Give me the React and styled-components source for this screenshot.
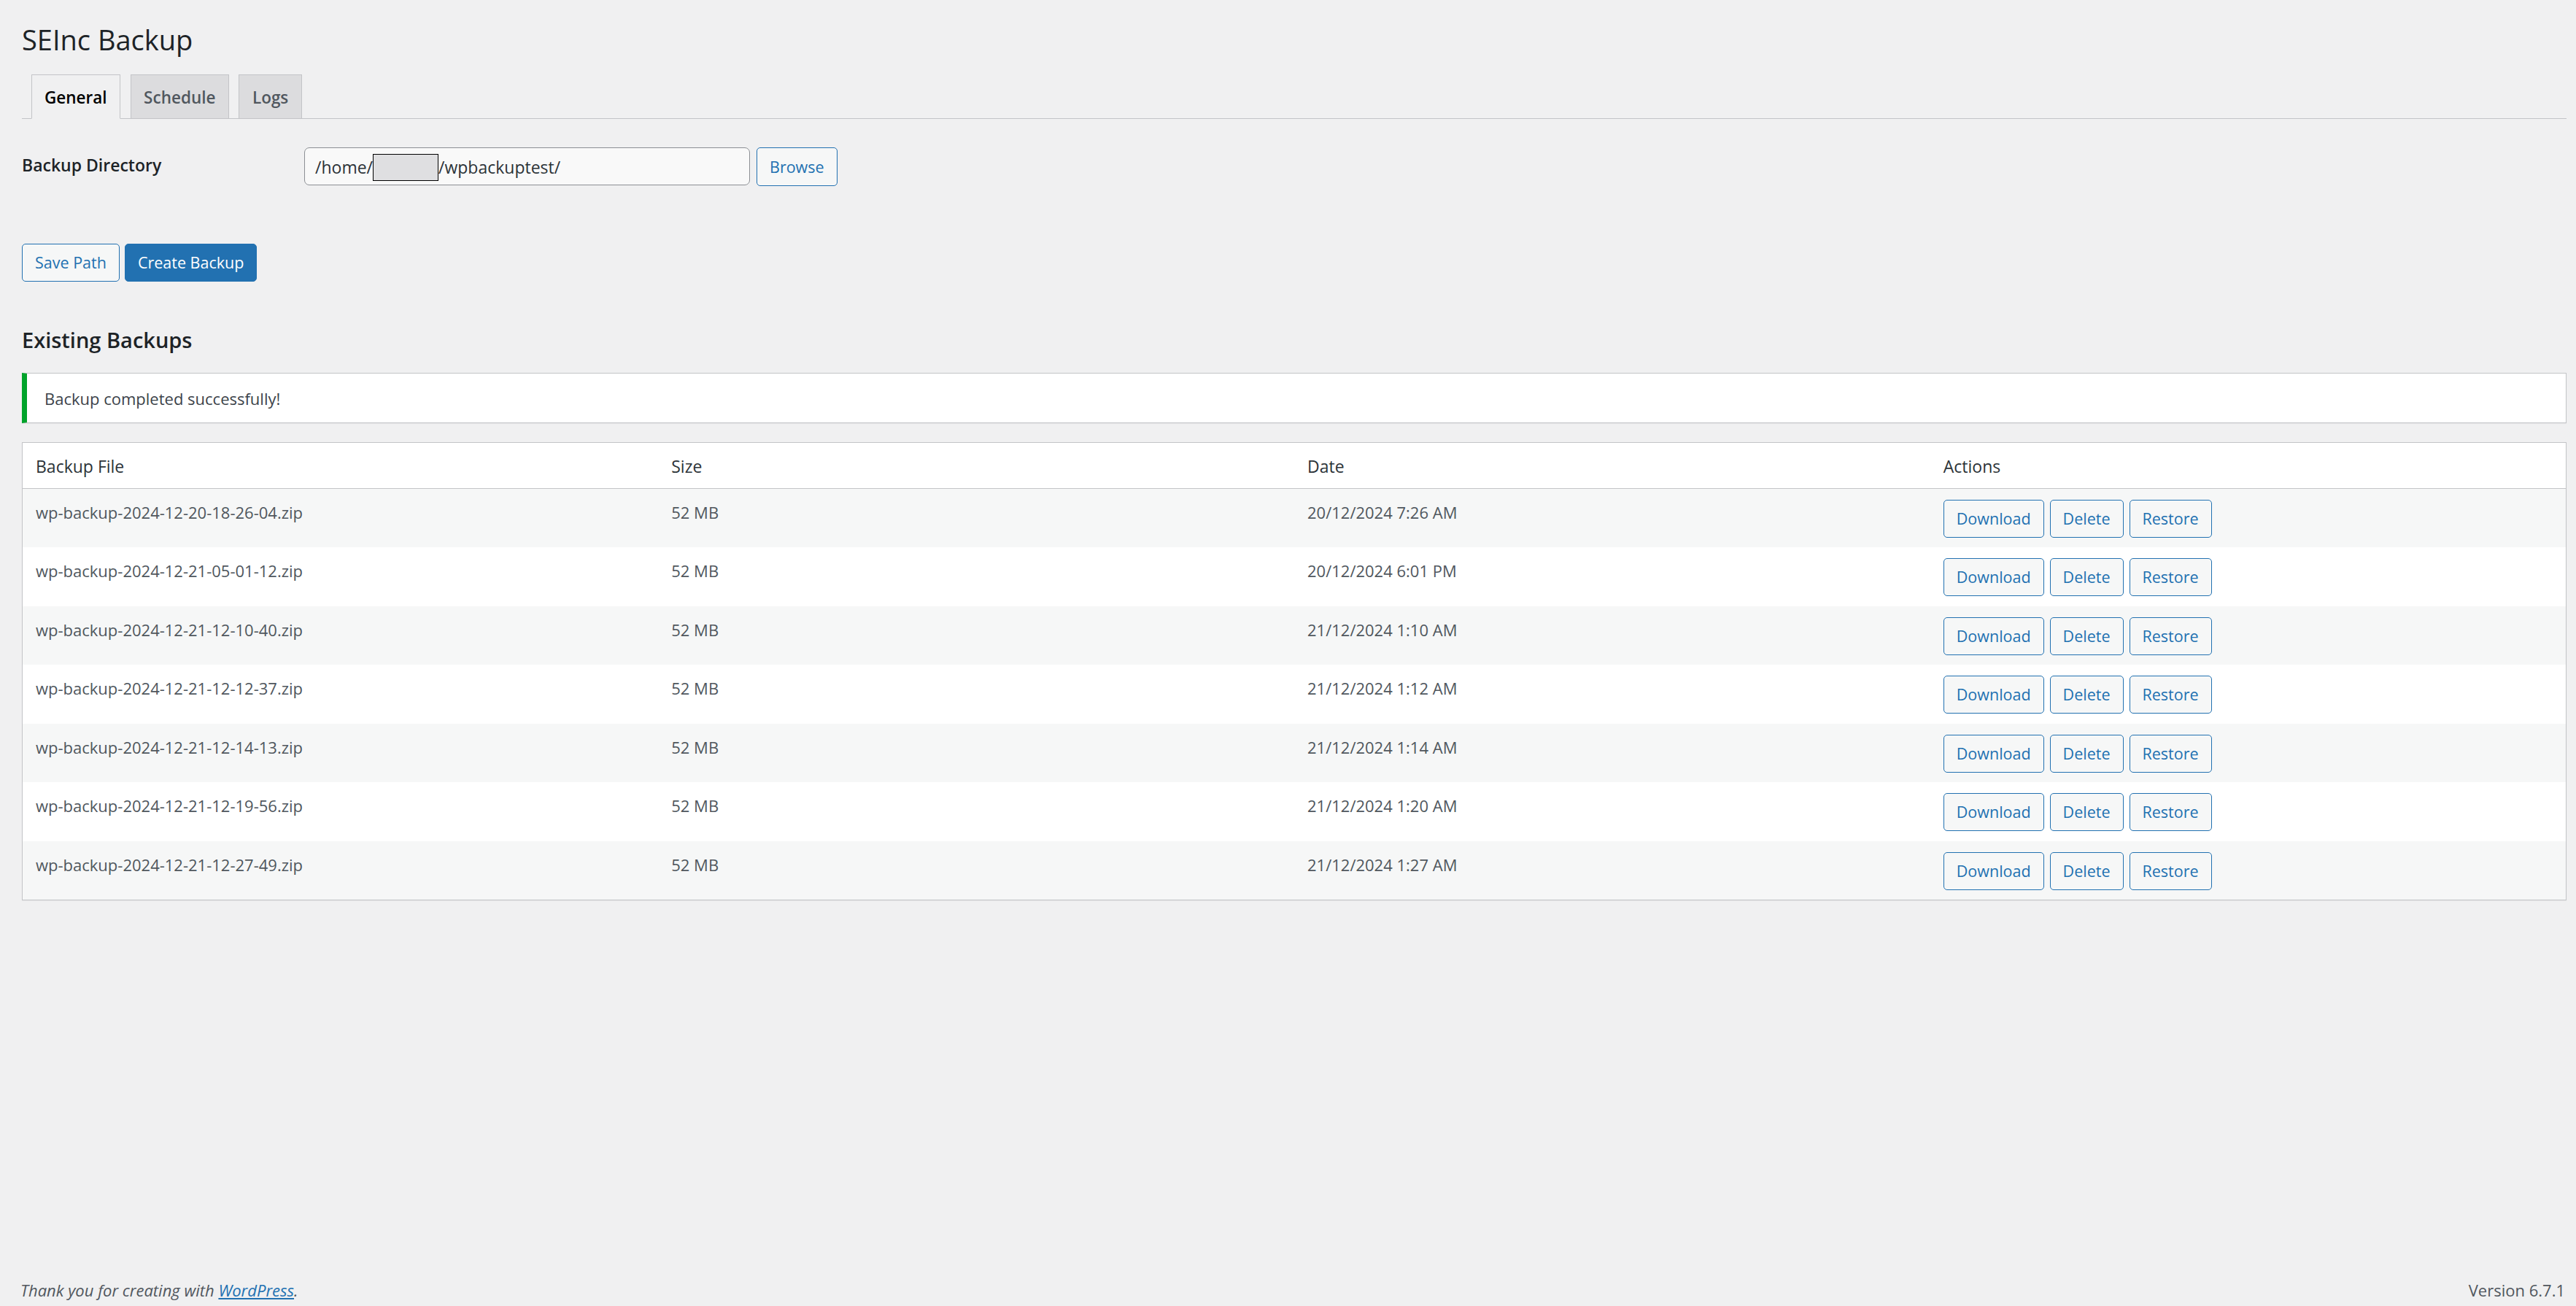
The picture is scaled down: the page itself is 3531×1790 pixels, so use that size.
import React from "react";
import styled, { createGlobalStyle, css } from "styled-components";

const backups = [
  { file: "wp-backup-2024-12-20-18-26-04.zip", size: "52 MB", date: "20/12/2024 7:26 AM" },
  { file: "wp-backup-2024-12-21-05-01-12.zip", size: "52 MB", date: "20/12/2024 6:01 PM" },
  { file: "wp-backup-2024-12-21-12-10-40.zip", size: "52 MB", date: "21/12/2024 1:10 AM" },
  { file: "wp-backup-2024-12-21-12-12-37.zip", size: "52 MB", date: "21/12/2024 1:12 AM" },
  { file: "wp-backup-2024-12-21-12-14-13.zip", size: "52 MB", date: "21/12/2024 1:14 AM" },
  { file: "wp-backup-2024-12-21-12-19-56.zip", size: "52 MB", date: "21/12/2024 1:20 AM" },
  { file: "wp-backup-2024-12-21-12-27-49.zip", size: "52 MB", date: "21/12/2024 1:27 AM" },
];

const tabs = ["General", "Schedule", "Logs"];

const App = () => {
  return (
    <>
      <GlobalStyle />
      <Page>
        <Wrap>
          <Title>SEInc Backup</Title>
          <TabBar>
            {tabs.map((t, i) => (
              <Tab key={t} $active={i === 0}>
                {t}
              </Tab>
            ))}
          </TabBar>

          <FormRow>
            <Label>Backup Directory</Label>
            <FieldGroup>
              <PathField>
                /home/<Redacted />/wpbackuptest/
              </PathField>
              <Button $size="lg">Browse</Button>
            </FieldGroup>
          </FormRow>

          <ButtonRow>
            <Button>Save Path</Button>
            <Button $primary>Create Backup</Button>
          </ButtonRow>

          <SectionTitle>Existing Backups</SectionTitle>
          <Notice>Backup completed successfully!</Notice>

          <Table>
            <thead>
              <tr>
                <Th>Backup File</Th>
                <Th>Size</Th>
                <Th>Date</Th>
                <Th>Actions</Th>
              </tr>
            </thead>
            <tbody>
              {backups.map((b, i) => (
                <Row key={b.file} $striped={i % 2 === 0}>
                  <Td>{b.file}</Td>
                  <Td>{b.size}</Td>
                  <Td>{b.date}</Td>
                  <Td>
                    <ActionGroup>
                      <Button>Download</Button>
                      <Button>Delete</Button>
                      <Button>Restore</Button>
                    </ActionGroup>
                  </Td>
                </Row>
              ))}
            </tbody>
          </Table>
        </Wrap>

        <Footer>
          <Thanks>
            Thank you for creating with <FooterLink href="#">WordPress</FooterLink>.
          </Thanks>
          <span>Version 6.7.1</span>
        </Footer>
      </Page>
    </>
  );
};

export default App;

const GlobalStyle = createGlobalStyle`
  * { box-sizing: border-box; }
  html, body {
    margin: 0;
    padding: 0;
    background: #f0f0f1;
  }
  body {
    font-family: "Open Sans", "Noto Sans", sans-serif;
    color: #3c434a;
    font-size: 22px;
  }
`;

const Page = styled.div`
  min-height: 100vh;
  display: flex;
  flex-direction: column;
`;

const Wrap = styled.div`
  padding: 28px 13px 0 30px;
`;

const Title = styled.h1`
  margin: 0;
  font-size: 38px;
  line-height: 52px;
  font-weight: 400;
  color: #1d2327;
`;

const TabBar = styled.nav`
  display: flex;
  align-items: flex-end;
  margin-top: 22px;
  padding-left: 12.5px;
  border-bottom: 1px solid #c3c4c7;
`;

const Tab = styled.a`
  height: 61px;
  margin: 0 13.5px -1px 0;
  padding: 0 17.5px;
  border: 1px solid #c3c4c7;
  background: #dcdcde;
  color: #50575e;
  font-size: 22.5px;
  font-weight: 600;
  line-height: 61px;
  text-decoration: none;

  ${p =>
    p.$active &&
    css`
      background: #f0f0f1;
      color: #000;
      border-bottom-color: #f0f0f1;
    `}
`;

const FormRow = styled.div`
  display: grid;
  grid-template-columns: 387px 1fr;
  margin-top: 39px;
`;

const Label = styled.div`
  padding-top: 7px;
  font-size: 23px;
  line-height: 34px;
  font-weight: 600;
  color: #1d2327;
`;

const FieldGroup = styled.div`
  display: flex;
  align-items: flex-start;
  gap: 9px;
`;

const PathField = styled.div`
  width: 611px;
  height: 52px;
  padding: 0 14px;
  border: 1px solid #8c8f94;
  border-radius: 7px;
  background: #f9f9f9;
  color: #2c3338;
  font-size: 23px;
  line-height: 52px;
  white-space: nowrap;
`;

const Redacted = styled.span`
  display: inline-block;
  width: 90px;
  height: 37px;
  vertical-align: middle;
  margin-top: -4px;
  background: #dfdfe1;
  border: 1px solid #000;
`;

const Button = styled.button`
  height: ${p => (p.$size === "lg" ? 53 : 52)}px;
  padding: 0 17px;
  border: 1px solid #2271b1;
  border-radius: 5px;
  background: #f6f7f7;
  color: #2271b1;
  font-family: inherit;
  font-size: 21.5px;
  line-height: 50px;
  cursor: pointer;

  ${p =>
    p.$primary &&
    css`
      background: #2271b1;
      color: #fff;
    `}
`;

const ButtonRow = styled.div`
  display: flex;
  gap: 7px;
  margin-top: 79px;
`;

const SectionTitle = styled.h2`
  margin: 59px 0 0;
  font-size: 29px;
  line-height: 42px;
  font-weight: 600;
  color: #1d2327;
`;

const Notice = styled.div`
  margin-top: 24px;
  padding: 17px 0 16px 24px;
  background: #fff;
  border: 1px solid #c3c4c7;
  border-left: 7px solid #00a32a;
  box-shadow: 0 1px 1px rgba(0, 0, 0, 0.04);
  font-size: 22px;
  line-height: 34px;
  color: #3c434a;
`;

const Table = styled.table`
  width: 100%;
  margin-top: 26px;
  table-layout: fixed;
  border-collapse: collapse;
  background: #fff;
  border: 1px solid #c3c4c7;
  box-shadow: 0 1px 1px rgba(0, 0, 0, 0.04);
`;

const Th = styled.th`
  padding: 15px 18px 13px;
  text-align: left;
  font-weight: 400;
  font-size: 23px;
  line-height: 34px;
  color: #2c3338;
  border-bottom: 1px solid #c3c4c7;
`;

const Row = styled.tr`
  height: 80.6px;
  background: ${p => (p.$striped ? "#f6f7f7" : "#fff")};
`;

const Td = styled.td`
  padding: 15px 18px 0;
  vertical-align: top;
  font-size: 22px;
  line-height: 34px;
  color: #50575e;
`;

const ActionGroup = styled.div`
  display: flex;
  gap: 8px;
`;

const Footer = styled.footer`
  margin-top: auto;
  display: flex;
  justify-content: space-between;
  padding: 0 15px 4px 28px;
  font-size: 22px;
  line-height: 35px;
  color: #50575e;
`;

const Thanks = styled.span`
  font-style: italic;
`;

const FooterLink = styled.a`
  color: #2271b1;
  text-decoration: underline;
`;
